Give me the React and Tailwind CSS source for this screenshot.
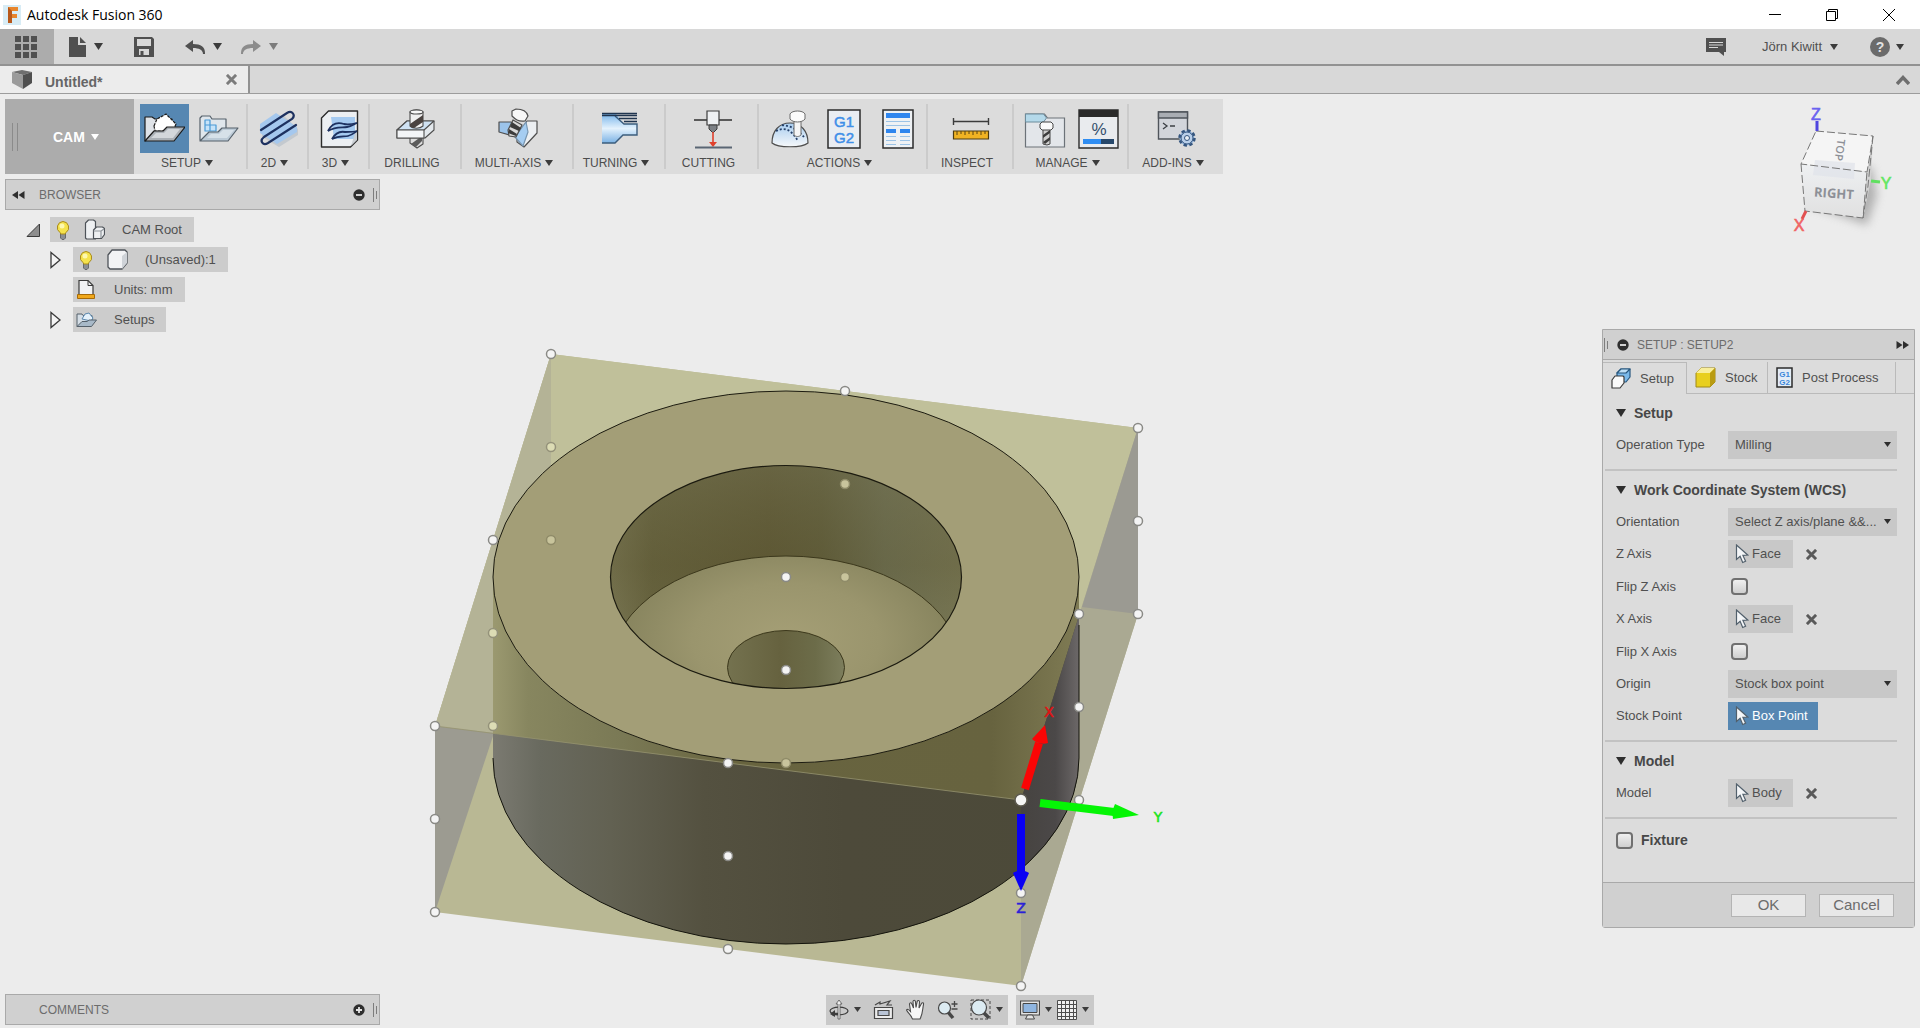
import React, { useState } from "react";

/* ---------- small shared glyphs ---------- */

function Caret({ className = "text-[#3c3c3c]" }) {
  return (
    <svg width="9" height="7" viewBox="0 0 9 7" className={`shrink-0 ${className}`} fill="currentColor">
      <path d="M0 0h9L4.5 7z" />
    </svg>
  );
}

function SmallCaret({ className = "text-[#3c3c3c]" }) {
  return (
    <svg width="8" height="6" viewBox="0 0 8 6" className={`shrink-0 ${className}`} fill="currentColor">
      <path d="M0 0h8L4 6z" />
    </svg>
  );
}

function Grip() {
  return (
    <svg width="5" height="14" viewBox="0 0 5 14" stroke="#7d7d7d" strokeWidth="1" className="shrink-0">
      <path d="M.5 0v14M3.5 3v8" />
    </svg>
  );
}

function RoundSign({ plus }) {
  return (
    <svg width="12" height="12" viewBox="0 0 12 12" className="shrink-0">
      <circle cx="6" cy="6" r="5.7" fill="#2e2e2e" />
      <path d={plus ? "M3 6h6M6 3v6" : "M3 6h6"} stroke="#e4e4e4" strokeWidth="1.8" />
    </svg>
  );
}

function Cross() {
  return (
    <svg width="11" height="11" viewBox="0 0 12 12" stroke="currentColor" strokeWidth="3.2">
      <path d="M1 1l10 10M11 1L1 11" />
    </svg>
  );
}

function Pointer() {
  return (
    <svg width="14" height="20" viewBox="0 0 14 20" className="shrink-0">
      <path d="M1.5 1v14.5l3.6-3.2 2.6 6.2 2.9-1.3-2.7-5.8 4.8-.4z" fill="#f4f6f8" stroke="#52606c" strokeWidth="1.2" />
    </svg>
  );
}

/* ---------- ribbon icons ---------- */

function SetupIcon() {
  return (
    <svg width="42" height="34" viewBox="0 0 42 34" stroke="#1c1c1c" strokeWidth="1.2" strokeLinejoin="round">
      <path d="M2 29V5h7l3 2h17v10z" fill="#dfe3e8" />
      <path d="M11 14l3-7 9-5 10 10-3 7H12z" fill="#fff" strokeDasharray="3 1" />
      <path d="M2 29l9-10h9l4-4h18L31 29z" fill="#aab0b6" />
      <path d="M13 21h8l4-4h12l-7 9H8z" fill="#d3d7db" stroke="none" />
    </svg>
  );
}

function FolderIcon() {
  return (
    <svg width="42" height="34" viewBox="0 0 42 34" stroke="#55606a" strokeWidth="1.2" strokeLinejoin="round">
      <path d="M3 28V6l2-2h8l2 3h14v10L16 28z" fill="#dfe6ec" />
      <path d="M8 8h5v5h6v6H8zM13 13v6M8 13h5" fill="#c7e3f8" stroke="#4a9ad6" />
      <path d="M3 29l9-9h9l4-4h16L31 29z" fill="#bccad6" />
      <path d="M14 22h8l4-4h11l-7 8H10z" fill="#d7e1e9" stroke="none" />
    </svg>
  );
}

function Milling2dIcon() {
  return (
    <svg width="40" height="40" viewBox="0 0 40 40">
      <path d="M3 18L24 6l15 14v6L20 38 3 28z" fill="#c3c9cf" />
      <path d="M1 15L17 4l21 14v5L18 35 1 24z" fill="#a5c8ee" />
      <g fill="none" stroke="#1d3160" strokeWidth="2.200" strokeLinecap="round">
        <path d="M2 21L28 4c5-3 9 2 5 6L5 28c-5 4-1 9 4 6l28-18" />
      </g>
    </svg>
  );
}

function Milling3dIcon() {
  return (
    <svg width="40" height="40" viewBox="0 0 40 40" strokeLinejoin="round">
      <path d="M1.500 9l7-7h29v29l-7 7h-29z" fill="#eceff2" stroke="#2b2b2b" strokeWidth="1.400" />
      <path d="M11 8h24v22H14z" fill="#a5caf0" />
      <path d="M31 37l6-6V18z" fill="#c9ced3" />
      <g fill="none" stroke="#1d3160" strokeWidth="1.800">
        <path d="M8 22c4-8 10-9 16-7 5 1 9 0 13-1" />
        <path d="M8 22c8-5 14-3 19-4s7-3 10-4" />
        <path d="M12 30c4-7 8-8 13-7 5 0 9 0 12-1" />
        <path d="M12 30c7-4 12-2 16-3s6-3 9-5" />
      </g>
    </svg>
  );
}

function DrillingIcon() {
  return (
    <svg width="42" height="42" viewBox="0 0 42 42" stroke="#4e4e4e" strokeWidth="1.100" strokeLinejoin="round">
      <path d="M15 28h13v8l-6 4-7-5z" fill="#dcdcdc" />
      <path d="M16 36l11-8v5l-6 6z" fill="#5b5b5b" stroke="none" />
      <path d="M2 22l10-9h27v9l-9 8H2z" fill="#e3e8ec" />
      <path d="M2 22h27l10-9H12z" fill="#cfe2f3" />
      <path d="M2 22h27v8H2z" fill="#f3f5f7" />
      <path d="M15 4v14c3 3 10 3 13 0V4c-3-3-10-3-13 0z" fill="#f0f0f0" />
      <path d="M15 16l13-9v7l-9 6c-2 0-4-1-4-2z" fill="#4b4340" stroke="none" />
      <ellipse cx="21.500" cy="4" rx="6.500" ry="2" fill="#f8f8f8" />
    </svg>
  );
}

function MultiAxisIcon() {
  return (
    <svg width="42" height="42" viewBox="0 0 42 42" stroke="#4e4e4e" strokeWidth="1.200" strokeLinejoin="round">
      <path d="M2 14h12l9 12-4 3L2 24z" fill="#9cc4ea" />
      <path d="M20 27l10-14h10v12L27 39l-7-5z" fill="#eceff2" />
      <path d="M18 29l11-15 2 10-5 14z" fill="#a5cdf2" stroke="#7795b0" />
      <path d="M16 12l9 5-6 12-7-1-1-6z" fill="#d9d9d9" />
      <path d="M15 14l9 6-2 3-9-4zM12 21l8 5-1 2-8-3z" fill="#3c3c3c" stroke="none" />
      <path d="M15 3l4-2c8 0 11 3 12 7l-3 5c-7 1-10-2-13-5z" fill="#f7f7f7" />
    </svg>
  );
}

function TurningIcon() {
  return (
    <svg width="38" height="34" viewBox="0 0 38 34">
      <defs>
        <linearGradient id="turn" x1="0" y1="0" x2="0" y2="1">
          <stop offset="0" stopColor="#7bb6ea" />
          <stop offset=".5" stopColor="#e4f2fd" />
          <stop offset="1" stopColor="#7bb2e4" />
        </linearGradient>
      </defs>
      <path d="M1 2h14l8 10h13v11H22l-8 8H1z" fill="url(#turn)" />
      <path d="M1 31h13l8-8h14V12H23L14 4" fill="none" stroke="#3d5d7c" strokeWidth="1.400" />
      <path d="M1 1.500h35M1 3.500h35M18 6.500h18M23 9.500h13" stroke="#20354f" strokeWidth="1.400" />
    </svg>
  );
}

function CuttingIcon() {
  return (
    <svg width="42" height="42" viewBox="0 0 42 42">
      <path d="M2 12h38" stroke="#2f2f2f" strokeWidth="1.500" />
      <path d="M15 3h12v14H15z" fill="#eef0f2" stroke="#3c3c3c" strokeWidth="1.200" />
      <path d="M17 17h8v4l-4 4-4-4z" fill="#7c8085" stroke="#3c3c3c" />
      <path d="M21 24v13" stroke="#e0402c" strokeWidth="1.600" />
      <path d="M17 34h8l-4 5z" fill="#e0402c" />
      <path d="M3 39.500h37" stroke="#5a6674" strokeWidth="2" />
    </svg>
  );
}

function SimulateIcon() {
  return (
    <svg width="40" height="40" viewBox="0 0 40 40">
      <defs>
        <linearGradient id="dome" x1="0" y1="0" x2="0" y2="1">
          <stop offset="0" stopColor="#a8cdf0" />
          <stop offset="1" stopColor="#f6f8fa" />
        </linearGradient>
      </defs>
      <path d="M2 34c0-12 7-20 18-20s18 8 18 20c-6 5-30 5-36 0z" fill="url(#dome)" stroke="#4d4d4d" strokeWidth="1.200" />
      <path d="M6 22c10-5 16 0 22 10M12 16c8 1 14 3 22 12" fill="none" stroke="#24406a" strokeWidth="1.800" strokeDasharray="2 2" />
      <path d="M24 12v14c2 2 5 2 7 0V12z" fill="#f5f5f5" stroke="#6a6a6a" />
      <path d="M20 5c2-4 13-4 15 0v5c-3 4-12 4-15 0z" fill="#fbfbfb" stroke="#6a6a6a" />
    </svg>
  );
}

function PostIcon() {
  return (
    <svg width="34" height="40" viewBox="0 0 34 40">
      <path d="M1 1h32v38H1z" fill="#e9edf2" stroke="#2b2b2b" strokeWidth="1.500" />
      <text x="17" y="18" textAnchor="middle" fontFamily="Liberation Sans, sans-serif" fontSize="15" fill="#3f8fe8" stroke="#3f8fe8" strokeWidth=".5">G1</text>
      <text x="17" y="34" textAnchor="middle" fontFamily="Liberation Sans, sans-serif" fontSize="15" fill="#3f8fe8" stroke="#3f8fe8" strokeWidth=".5">G2</text>
    </svg>
  );
}

function SheetIcon() {
  return (
    <svg width="32" height="40" viewBox="0 0 32 40">
      <path d="M1 1h30v38H1z" fill="#eef1f4" stroke="#2b2b2b" strokeWidth="1.500" />
      <path d="M4 4h24v5H4zM4 20h10v4H4zM18 20h10v4H18z" fill="#2f86ee" />
      <path d="M4 12.500h24M4 16.500h24M4 27.500h10M4 31.500h10M4 35.500h10M18 27.500h10M18 31.500h10M18 35.500h10" stroke="#9cc3e6" />
    </svg>
  );
}

function InspectIcon() {
  return (
    <svg width="38" height="24" viewBox="0 0 38 24">
      <path d="M1.500 1v7M36.500 1v7M1 4.500h36" stroke="#3c3c3c" strokeWidth="1.400" />
      <path d="M1.500 14h35v8h-35z" fill="#f0b323" stroke="#4d3c12" strokeWidth="1.200" />
      <path d="M5 14v4M9 14v3M13 14v4M17 14v3M21 14v4M25 14v3M29 14v4M33 14v3" stroke="#5a4412" />
    </svg>
  );
}

function ToolLibraryIcon() {
  return (
    <svg width="42" height="40" viewBox="0 0 42 40">
      <path d="M1.500 5h19l3 4h17v29h-39z" fill="#e3e6ea" stroke="#6c7278" strokeWidth="1.200" />
      <path d="M1.500 5h18l3 4-3 4h-18z" fill="#b4d9ea" stroke="#6d8c9c" />
      <path d="M19 18h7v17l-3 1-4-1z" fill="#cfcfcf" stroke="#454545" />
      <path d="M19 26l7-5v3l-7 5zM19 33l7-5v3l-5 4z" fill="#3c3c3c" />
      <path d="M16 15l2-2h9l2 2v4l-2 2h-9l-2-2z" fill="#fafafa" stroke="#454545" />
    </svg>
  );
}

function TaskIcon() {
  return (
    <svg width="41" height="40" viewBox="0 0 41 40">
      <path d="M1 1h39v38H1z" fill="#e9ebee" stroke="#2b2b2b" strokeWidth="1.400" />
      <path d="M1 1h39v7H1z" fill="#2a2a2a" />
      <text x="21" y="26" textAnchor="middle" fontFamily="Liberation Sans, sans-serif" fontSize="17" fill="#35506c">%</text>
      <path d="M5 30h18v5H5z" fill="#2f8df2" />
      <path d="M23 30h13v5H23z" fill="#27486b" />
    </svg>
  );
}

function AddInsIcon() {
  return (
    <svg width="40" height="38" viewBox="0 0 40 38">
      <path d="M1.500 2h29v27h-29z" fill="#d2d5db" stroke="#4f545b" strokeWidth="1.400" />
      <path d="M1.500 2h29v6h-29z" fill="#a9adb3" stroke="#4f545b" strokeWidth="1.400" />
      <path d="M6 13l4 3-4 3M13 16h5" fill="none" stroke="#3c4046" strokeWidth="1.300" />
      <circle cx="30" cy="28" r="7.500" fill="#9cbbe0" stroke="#35567f" strokeWidth="2.500" strokeDasharray="3.400 2.490" />
      <circle cx="30" cy="28" r="6" fill="#b9cfe9" stroke="#35567f" />
      <circle cx="30" cy="28" r="2.500" fill="#e8eef5" stroke="#35567f" />
    </svg>
  );
}

/* ---------- browser tree icons ---------- */

function Bulb() {
  return (
    <svg width="16" height="20" viewBox="0 0 16 20" className="shrink-0">
      <path d="M5.500 13h5v5l-1.500 1.500H7L5.500 18z" fill="#8b8f95" stroke="#55585c" strokeWidth=".8" />
      <path d="M8 1.500a6 6 0 0 0-3 11l.8 1.500h4.400l.8-1.500a6 6 0 0 0-3-11z" fill="#f5e34d" stroke="#a98b1c" />
      <circle cx="7" cy="6" r="2.500" fill="#fdf8b0" />
    </svg>
  );
}

function ComponentIcon() {
  return (
    <svg width="21" height="21" viewBox="0 0 21 21" className="shrink-0" fill="#eef0f2" stroke="#4e5359" strokeWidth="1.200" strokeLinejoin="round">
      <path d="M1.500 4l3-3h5l2 1.500V20h-9l-1-1z" />
      <path d="M9.500 11l3-3h6l2 1.500v6l-3 4h-8z" />
      <path d="M9.500 12h7.500v7M17 12l3-2" fill="none" stroke="#8f959b" />
    </svg>
  );
}

function BodyIcon() {
  return (
    <svg width="21" height="21" viewBox="0 0 21 21" className="shrink-0" strokeLinejoin="round">
      <path d="M1 6l4-5h13l2 2v11l-5 6H3l-2-2z" fill="#f2f3f5" stroke="#4e5359" strokeWidth="1.300" />
      <path d="M15 20V7l5-4v11z" fill="#cfd3d8" />
    </svg>
  );
}

function UnitsIcon() {
  return (
    <svg width="21" height="21" viewBox="0 0 21 21" className="shrink-0">
      <path d="M3 15V1.500h9l5 5V15" fill="#f1f2f4" stroke="#3b3b3b" strokeWidth="1.200" />
      <path d="M12 1.500v5h5" fill="none" stroke="#3b3b3b" />
      <path d="M1.500 15.500h17v4h-17z" fill="#f0a81c" stroke="#a86b08" />
    </svg>
  );
}

function SetupsIcon() {
  return (
    <svg width="21" height="16" viewBox="0 0 21 16" className="shrink-0" stroke="#55606a" strokeLinejoin="round">
      <path d="M1 14.500V2h5l1 1.500h9V9l-8 5.500z" fill="#d5dee6" />
      <path d="M6 7l3-5 4-1 4 5-2 3z" fill="#e4f1fb" stroke="#5b87ad" />
      <path d="M1 14.500L6 9.500h5l2-1.500h7.500l-5 6.500z" fill="#a8b9c8" />
    </svg>
  );
}

/* ---------- dialog tab icons ---------- */

function SetupTabIcon() {
  return (
    <svg width="20" height="21" viewBox="0 0 20 21" strokeLinejoin="round" strokeWidth="1.200">
      <path d="M6 5l4-4h9v8l-4 5H6z" fill="#7ab9ea" stroke="#27577f" />
      <path d="M6 5h9l4-4h-9z" fill="#bfe0f7" stroke="#27577f" />
      <path d="M1 12l3-4h8l1 1v6l-4 5H1z" fill="#fafafa" stroke="#3b3b3b" />
    </svg>
  );
}

function StockTabIcon() {
  return (
    <svg width="21" height="21" viewBox="0 0 21 21">
      <path d="M1 6l5-5h14v14l-5 5H1z" fill="#e8cf1f" stroke="#a08a18" />
      <path d="M1 6l5-5h14l-5 5z" fill="#f8ee9c" />
      <path d="M15 6l5-5v14l-5 5z" fill="#b99b12" />
    </svg>
  );
}

function PostTabIcon() {
  return (
    <svg width="17" height="21" viewBox="0 0 17 21">
      <path d="M1 1h15v19H1z" fill="#e4edf6" stroke="#2b2b2b" strokeWidth="1.500" />
      <text x="8.500" y="10" textAnchor="middle" fontFamily="Liberation Sans, sans-serif" fontWeight="700" fontSize="8" fill="#3b86da">G1</text>
      <text x="8.500" y="18" textAnchor="middle" fontFamily="Liberation Sans, sans-serif" fontWeight="700" fontSize="8" fill="#3b86da">G2</text>
    </svg>
  );
}

/* ---------- window chrome ---------- */

function TitleBar() {
  return (
    <header className="flex h-[29px] items-center bg-white pl-[3px] text-black">
      <svg width="18" height="20" viewBox="0 0 18 20" className="shrink-0">
        <path d="M0 0h18v20H0z" fill="#d8ecf5" />
        <path d="M5 2h10v4H9v3h5v4H9v5H5z" fill="#e8852c" />
        <path d="M5 2l4 4v12H5z" fill="#b8581a" />
      </svg>
      <h1 className="ml-1.5 font-['Open_Sans','Noto_Sans',sans-serif] text-[14px] leading-5">Autodesk Fusion 360</h1>
      <div className="ml-auto flex h-full pr-[3px]">
        <button aria-label="Minimize" className="flex w-[57px] items-center justify-center">
          <svg width="12" height="12" viewBox="0 0 12 12" stroke="currentColor"><path d="M0 5.500h12" /></svg>
        </button>
        <button aria-label="Restore" className="flex w-[57px] items-center justify-center">
          <svg width="12" height="12" viewBox="0 0 12 12" stroke="currentColor" fill="none">
            <path d="M.5 2.500h9v9h-9zM2.500 2.500v-2h9v9h-2" />
          </svg>
        </button>
        <button aria-label="Close" className="flex w-[57px] items-center justify-center">
          <svg width="12" height="12" viewBox="0 0 12 12" stroke="currentColor"><path d="M0 0l12 12M12 0L0 12" /></svg>
        </button>
      </div>
    </header>
  );
}

function QuickBar() {
  return (
    <div className="flex h-[37px] border-b-2 border-[#929292] bg-[#d8d8d8] text-[#505050]">
      <button aria-label="Show data panel" className="flex w-[54px] items-center bg-[#acacac] pl-[15px]">
        <svg width="22" height="22" viewBox="0 0 22 22" fill="currentColor">
          <path d="M0 0h6v6H0zM8 0h6v6H8zM16 0h6v6h-6zM0 8h6v6H0zM8 8h6v6H8zM16 8h6v6h-6zM0 16h6v6H0zM8 16h6v6H8zM16 16h6v6h-6z" />
        </svg>
      </button>
      <div className="ml-[15px] flex items-center gap-[31px]">
        <button aria-label="File" className="flex items-center gap-2">
          <svg width="17" height="20" viewBox="0 0 17 20" fill="currentColor"><path d="M0 0h9v8h8v12H0z" /><path d="M11 0l6 6h-6z" /></svg>
          <Caret />
        </button>
        <button aria-label="Save">
          <svg width="20" height="20" viewBox="0 0 20 20" fill="currentColor">
            <path fillRule="evenodd" d="M0 0h18l2 2v18H0zM3 2v7h14V2zM5 12v6h10v-6z" />
            <path d="M6.500 14h3v4h-3z" />
          </svg>
        </button>
        <div className="flex items-center gap-[19px]">
          <button aria-label="Undo" className="flex items-center gap-2">
            <svg width="20" height="14" viewBox="0 0 20 14" fill="currentColor"><path d="M0 6l8-6v4c8 0 12 3 12 9v1h-2c0-4-4-6-10-6v4z" /></svg>
            <Caret />
          </button>
          <button aria-label="Redo" className="flex items-center gap-2 text-[#8c8c8c]">
            <svg width="20" height="14" viewBox="0 0 20 14" fill="currentColor"><path d="M20 6l-8-6v4C4 4 0 7 0 13v1h2c0-4 4-6 10-6v4z" /></svg>
            <Caret className="text-[#7c7c7c]" />
          </button>
        </div>
      </div>
      <div className="ml-auto flex items-center gap-9 pr-4">
        <button aria-label="Notifications">
          <svg width="20" height="18" viewBox="0 0 20 18">
            <path d="M0 0h20v14h-2v4l-5-4H0z" fill="currentColor" />
            <path d="M3 4.500h14M3 7h14M3 9.500h9" stroke="#d8d8d8" strokeWidth="1.200" />
          </svg>
        </button>
        <button className="flex items-center gap-2 text-[13px] leading-4 text-[#505050]">
          Jörn Kiwitt
          <SmallCaret />
        </button>
        <button aria-label="Help" className="-ml-1 flex items-center gap-1.5">
          <svg width="20" height="20" viewBox="0 0 20 20">
            <circle cx="10" cy="10" r="10" fill="#6b6b6b" />
            <text x="10" y="15" textAnchor="middle" fontFamily="Liberation Sans, sans-serif" fontWeight="700" fontSize="14" fill="#e2e2e2">?</text>
          </svg>
          <SmallCaret />
        </button>
      </div>
    </div>
  );
}

function DocumentTabs() {
  return (
    <nav className="flex h-7 border-b border-[#9c9c9c] bg-[#d8d8d8]">
      <div className="flex w-[250px] items-center border-r-2 border-[#929292] bg-[#ececec] pr-[11px] pl-3">
        <svg width="20" height="19" viewBox="0 0 20 19" className="shrink-0">
          <path d="M0 2l10-2 10 2-9 3z" fill="#6f6f6f" />
          <path d="M0 2l11 3v14L0 13z" fill="#9b9b9b" />
          <path d="M11 5l9-3v11l-9 6z" fill="#4f4f4f" />
        </svg>
        <span className="ml-[13px] pt-1 text-[14px] leading-5 font-bold text-[#666666]">Untitled*</span>
        <button aria-label="Close tab" className="ml-auto text-[#7c7c7c]"><Cross /></button>
      </div>
      <button aria-label="Collapse" className="mr-2.5 ml-auto text-[#6e6e6e]">
        <svg width="14" height="10" viewBox="0 0 14 10" fill="none" stroke="currentColor" strokeWidth="3.400"><path d="M1 9l6-6.500L13 9" /></svg>
      </button>
    </nav>
  );
}

/* ---------- ribbon ---------- */

const RIBBON = [
  { label: "SETUP", menu: true, width: "w-[114px]", icons: [SetupIcon, FolderIcon], active: 0 },
  { label: "2D", menu: true, width: "w-[61px]", icons: [Milling2dIcon] },
  { label: "3D", menu: true, width: "w-[61px]", icons: [Milling3dIcon] },
  { label: "DRILLING", width: "w-[92px]", icons: [DrillingIcon] },
  { label: "MULTI-AXIS", menu: true, width: "w-[112px]", icons: [MultiAxisIcon] },
  { label: "TURNING", menu: true, width: "w-[92px]", icons: [TurningIcon] },
  { label: "CUTTING", width: "w-[93px]", icons: [CuttingIcon] },
  { label: "ACTIONS", menu: true, width: "w-[169px]", icons: [SimulateIcon, PostIcon, SheetIcon] },
  { label: "INSPECT", width: "w-[86px]", icons: [InspectIcon] },
  { label: "MANAGE", menu: true, width: "w-[115px]", icons: [ToolLibraryIcon, TaskIcon] },
  { label: "ADD-INS", menu: true, width: "w-[94px]", icons: [AddInsIcon] },
];

function RibbonGroup({ group, last }) {
  return (
    <div className={`flex flex-col items-center ${group.width} ${last ? "" : "border-r-2 border-[#cbcbcb]"}`}>
      <div className="flex gap-[5px] pl-0.5">
        {group.icons.map((Icon, i) => (
          <button
            key={i}
            aria-label={`${group.label} ${i + 1}`}
            className={`flex size-[49px] items-center justify-center ${group.active === i ? "bg-[#5687b2]" : ""}`}
          >
            <Icon />
          </button>
        ))}
      </div>
      <button className="mt-0.5 flex items-center gap-1 pr-1.5 text-[12px] leading-4 text-[#4c4c4c]">
        {group.label}
        {group.menu && <SmallCaret />}
      </button>
    </div>
  );
}

function Ribbon() {
  return (
    <div className="flex h-[75px] self-start bg-[#dcdcdc]">
      <button className="flex w-[129px] items-center bg-[#acacac] pl-[7px] text-[14px] leading-5 font-bold text-white">
        <svg width="7" height="28" viewBox="0 0 7 28" stroke="#8b8b8b"><path d="M.5 0v28M5.500 0v28" /></svg>
        <span className="mr-1.5 ml-[34px]">CAM</span>
        <SmallCaret className="text-white" />
      </button>
      <div className="flex py-[5px]">
        {RIBBON.map((group, i) => (
          <RibbonGroup key={group.label} group={group} last={i === RIBBON.length - 1} />
        ))}
      </div>
    </div>
  );
}

/* ---------- browser ---------- */

function BarPanel({ title, plus, children }) {
  return (
    <div className="flex h-[31px] w-[375px] items-center border border-[#a9a9a9] bg-[#d0d0d0] pr-px text-[12px] leading-4 text-[#6c6c6c]">
      <div className="w-[33px] pl-1.5">{children}</div>
      <h2>{title}</h2>
      <button aria-label={plus ? "Expand" : "Minimize panel"} className="mr-2 ml-auto"><RoundSign plus={plus} /></button>
      <Grip />
    </div>
  );
}

function TreeRow({ indent, toggle, bulb, icon, label }) {
  return (
    <li className={`flex items-center gap-2.5 ${indent ? "pl-[44px]" : "pl-[21px]"}`}>
      <svg width="14" height="18" viewBox="0 0 14 18" className="shrink-0">
        {toggle === "open" && <path d="M13.500 3v12.500H1z" fill="#8d8d8d" stroke="#3a3a3a" />}
        {toggle === "closed" && <path d="M2 1.500l9 7.500-9 7.500z" fill="#f4f4f4" stroke="#3a3a3a" strokeWidth="1.300" />}
      </svg>
      <div className={`flex h-[25px] items-center bg-[#cccccc] pr-3 ${bulb ? "pl-[5px]" : "pl-[3px]"}`}>
        {bulb && <span className="mr-[13px]"><Bulb /></span>}
        {icon}
        <span className="ml-[17px] text-[13px] leading-4 text-[#505050]">{label}</span>
      </div>
    </li>
  );
}

function Browser() {
  return (
    <aside className="mt-[5px]">
      <BarPanel title="BROWSER">
        <svg width="13" height="8" viewBox="0 0 13 8" fill="#2e2e2e"><path d="M6 0v8L0 4zM12.500 0v8l-6-4z" /></svg>
      </BarPanel>
      <ul className="mt-[7px] flex flex-col gap-[5px]">
        <TreeRow toggle="open" bulb icon={<ComponentIcon />} label="CAM Root" />
        <TreeRow indent toggle="closed" bulb icon={<BodyIcon />} label="(Unsaved):1" />
        <TreeRow indent icon={<UnitsIcon />} label="Units: mm" />
        <TreeRow indent toggle="closed" icon={<SetupsIcon />} label="Setups" />
      </ul>
    </aside>
  );
}

/* ---------- 3D scene ---------- */

// stock box points: [x, y, shade], where shade 0 is free, 1 lies behind the stock, 2 behind the body
const POINTS = [
  [551, 354, 0], [845, 391, 0], [1138, 428, 0], [1138, 521, 0], [1138, 614, 0],
  [551, 447, 1], [551, 540, 2], [493, 540, 0], [493, 633, 1], [493, 726, 1],
  [435, 726, 0], [435, 819, 0], [435, 912, 0], [728, 763, 0], [728, 856, 0],
  [728, 949, 0], [1021, 986, 0], [1021, 893, 0], [1079, 614, 0], [1079, 707, 0],
  [1079, 800, 0], [786, 577, 0], [786, 670, 0], [786, 763, 2], [845, 484, 2], [845, 577, 2],
];
const POINT_FILL = ["#f4f4f4", "#dcdcb4", "#c8c49c"];
const POINT_RING = ["#8a8a86", "#94927a", "#8f8b68"];

function Scene() {
  const side = "M493 577V758A293 186 0 0 0 1079 758V577A293 186 0 0 1 493 577z";
  return (
    <svg viewBox="0 94 1920 934" className="absolute inset-0 h-full w-full" role="img" aria-label="Model view">
      <defs>
        <linearGradient id="sideDark" gradientUnits="userSpaceOnUse" x1="493" y1="0" x2="1079" y2="0">
          <stop offset="0" stopColor="#7b7a71" />
          <stop offset=".08" stopColor="#696a5f" />
          <stop offset=".2" stopColor="#626152" />
          <stop offset=".36" stopColor="#545140" />
          <stop offset=".6" stopColor="#4d4a3a" />
          <stop offset="1" stopColor="#4c4a39" />
        </linearGradient>
        <linearGradient id="sideOlive" gradientUnits="userSpaceOnUse" x1="493" y1="0" x2="1079" y2="0">
          <stop offset="0" stopColor="#9b9970" />
          <stop offset=".06" stopColor="#87865f" />
          <stop offset=".22" stopColor="#7a7955" />
          <stop offset=".42" stopColor="#68643f" />
          <stop offset=".85" stopColor="#67633f" />
          <stop offset="1" stopColor="#7f7b54" />
        </linearGradient>
        <linearGradient id="sideRight" gradientUnits="userSpaceOnUse" x1="1020" y1="0" x2="1079" y2="0">
          <stop offset="0" stopColor="#464340" />
          <stop offset=".6" stopColor="#4b4848" />
          <stop offset="1" stopColor="#6c6868" />
        </linearGradient>
        <linearGradient id="wall" gradientUnits="userSpaceOnUse" x1="610" y1="0" x2="962" y2="0">
          <stop offset="0" stopColor="#7f7d5a" />
          <stop offset=".12" stopColor="#6b6844" />
          <stop offset=".45" stopColor="#625d3a" />
          <stop offset=".6" stopColor="#646240" />
          <stop offset=".78" stopColor="#73765a" />
          <stop offset="1" stopColor="#7e7e5c" />
        </linearGradient>
        <linearGradient id="wallShade" x1="0" y1="0" x2="0" y2="1">
          <stop offset="0" stopColor="#6e6b4a" stopOpacity=".5" />
          <stop offset=".45" stopColor="#544d28" stopOpacity=".35" />
          <stop offset="1" stopColor="#544d28" stopOpacity="0" />
        </linearGradient>
        <radialGradient id="floor" gradientUnits="userSpaceOnUse" cx="786" cy="640" r="170" gradientTransform="translate(0 250) scale(1 .61)">
          <stop offset="0" stopColor="#a59f76" />
          <stop offset=".55" stopColor="#9a956d" />
          <stop offset="1" stopColor="#86835d" />
        </radialGradient>
        <linearGradient id="bore" gradientUnits="userSpaceOnUse" x1="727" y1="0" x2="845" y2="0">
          <stop offset="0" stopColor="#74724f" />
          <stop offset=".45" stopColor="#66623f" />
          <stop offset=".75" stopColor="#6c6c49" />
          <stop offset="1" stopColor="#7d7e5d" />
        </linearGradient>
        <clipPath id="stockTop"><path d="M551 354L1138 428 1021 800 435 726z" /></clipPath>
        <clipPath id="rightFace"><path d="M1138 428V614L1021 986V800z" /></clipPath>
        <clipPath id="pocket"><ellipse cx="786" cy="577" rx="175.500" ry="111.500" /></clipPath>
      </defs>

      {/* stock */}
      <path d="M551 354L1138 428V614L1021 986 435 912V726z" fill="#b9b894" />
      <path d="M551 354L1138 428 1021 800 435 726z" fill="#c0c09a" />
      <path d="M551 354V540L493 733 435 726z" fill="#b4b396" />
      <path d="M435 726L494 733 435 912z" fill="#9c9b91" />
      <path d="M1138 428V614L1021 986V800z" fill="#aaa992" />
      <path d="M1138 428V614L1082 607z" fill="#9b9a92" />

      {/* body */}
      <path d={side} fill="url(#sideDark)" />
      <path d={side} fill="url(#sideOlive)" clipPath="url(#stockTop)" />
      <path d={side} fill="url(#sideRight)" clipPath="url(#rightFace)" />
      <path d="M435 726L1021 800" stroke="#96946f" strokeOpacity=".8" />
      <path d="M493 758A293 186 0 0 0 1079 758V625" fill="none" stroke="#14140c" />
      <ellipse cx="786" cy="577" rx="293" ry="186" fill="#a39e77" stroke="#1c1b10" />

      <g clipPath="url(#pocket)">
        <path d="M610 465h353v224H610z" fill="url(#wall)" />
        <path d="M610 465h353v224H610z" fill="url(#wallShade)" />
        <ellipse cx="786" cy="667.500" rx="175.500" ry="111.500" fill="url(#floor)" stroke="#3c381c" />
        <ellipse cx="786" cy="667.500" rx="58.500" ry="37" fill="url(#bore)" stroke="#3c381c" />
      </g>
      <ellipse cx="786" cy="577" rx="175.500" ry="111.500" fill="none" stroke="#1c1b10" strokeWidth="1.200" />

      {POINTS.map(([x, y, shade]) => (
        <circle key={`${x}-${y}`} cx={x} cy={y} r="4.500" fill={POINT_FILL[shade]} stroke={POINT_RING[shade]} strokeWidth="1.500" />
      ))}

      {/* WCS triad */}
      <path d="M1021 814v60" stroke="#0a00f4" strokeWidth="8" />
      <path d="M1013 873c4-3 12-3 16 0l-8 18z" fill="#0a00f4" />
      <path d="M1025 789l14-46" stroke="#fa0505" strokeWidth="8" />
      <path d="M1032 739l13-14 3 18c-5 2-12 0-16-4z" fill="#fa0505" />
      <path d="M1040 803l74 9" stroke="#05f505" strokeWidth="8" />
      <path d="M1115 804l24 11-26 4c-1-5 0-11 2-15z" fill="#05f505" />
      <circle cx="1021" cy="800" r="6" fill="#f6f6f6" stroke="#5d5a50" strokeWidth="1.500" />
      <g fontFamily="DejaVu Sans, sans-serif" fontSize="14" textAnchor="middle" strokeWidth=".5">
        <text x="1049" y="717" fill="#e01414" stroke="#e01414">X</text>
        <text x="1158" y="822" fill="#1be41b" stroke="#1be41b">Y</text>
        <text x="1021" y="913" fill="#2a20d8" stroke="#2a20d8">Z</text>
      </g>
    </svg>
  );
}

function ViewCube() {
  return (
    <svg width="110" height="140" viewBox="1790 99 110 140" className="mr-4" role="img" aria-label="View cube">
      <defs>
        <filter id="soft" x="-30%" y="-30%" width="160%" height="160%"><feGaussianBlur stdDeviation="5" /></filter>
        <linearGradient id="cubeFront" x1="0" y1="0" x2="0" y2="1">
          <stop offset="0" stopColor="#eef0f2" />
          <stop offset="1" stopColor="#e0e0e0" />
        </linearGradient>
      </defs>
      <path d="M1810 205l62-40 6 30-10 30z" fill="#8a8a8a" opacity=".6" filter="url(#soft)" />
      <path d="M1817 131l57 5-6 36-66-8z" fill="#f5f5f5" />
      <path d="M1802 164l66 8-4 46-58-7z" fill="url(#cubeFront)" />
      <path d="M1874 136l-6 36-4 46 8-38z" fill="#d2d2d2" />
      <path d="M1816 160l40 3-1 16-41-4z" fill="#dfe3ea" opacity=".7" />
      <path d="M1817 131l57 5-6 36-66-8zM1802 164l4 47 58 7 4-46M1874 136l-5 50-5 32" fill="none" stroke="#777" strokeDasharray="8 3" />
      <g strokeWidth="3">
        <path d="M1818 121v10" stroke="#4f45e0" />
        <path d="M1872 181l9 1" stroke="#5fe05f" />
        <path d="M1807 211l-4 8" stroke="#e25050" />
      </g>
      <g textAnchor="middle" fontFamily="Open Sans, sans-serif" fill="#8d9097">
        <text x="1835" y="198" fontWeight="700" fontSize="13" transform="rotate(4 1835 193)">RIGHT</text>
        <text x="1841" y="154" fontWeight="600" fontSize="11" transform="rotate(98 1841 150)">TOP</text>
      </g>
      <g textAnchor="middle" fontFamily="Liberation Sans, sans-serif" fontSize="16" strokeWidth=".6">
        <text x="1817" y="120" fill="#6a62f0" stroke="#6a62f0">Z</text>
        <text x="1887" y="189" fill="#63e663" stroke="#63e663">Y</text>
        <text x="1800" y="231" fill="#f06464" stroke="#f06464">X</text>
      </g>
    </svg>
  );
}

/* ---------- setup dialog ---------- */

function Heading({ children }) {
  return (
    <h3>
      <button className="flex h-[18px] items-center gap-2 text-[14px] leading-[18px] font-bold text-[#474747]">
        <svg width="10" height="8" viewBox="0 0 10 8" fill="#2e2e2e"><path d="M0 0h10L5 8z" /></svg>
        {children}
      </button>
    </h3>
  );
}

function Row({ label, htmlFor, tall, children }) {
  return (
    <div className={`flex items-center ${tall ? "h-[29px]" : "h-7"}`}>
      <label htmlFor={htmlFor} className="w-[112px] shrink-0">{label}</label>
      {children}
    </div>
  );
}

function Dropdown({ id, options }) {
  return (
    <div className="relative flex-1">
      <select id={id} className="h-7 w-full appearance-none truncate bg-[#c8c8c8] pr-4 pl-[7px] text-[13px] leading-4">
        {options.map((o) => (
          <option key={o}>{o}</option>
        ))}
      </select>
      <svg width="7" height="5" viewBox="0 0 7 5" fill="#2e2e2e" className="pointer-events-none absolute top-[11px] right-1.5"><path d="M0 0h7L3.500 5z" /></svg>
    </div>
  );
}

function Picker({ id, label, active, clearable }) {
  return (
    <>
      <button
        id={id}
        className={`flex h-7 items-center gap-[3px] pl-[7px] ${active ? "w-[90px] bg-[#5687b2] text-white" : "w-[65px] bg-[#c8c8c8]"}`}
      >
        <Pointer />
        {label}
      </button>
      {clearable && <button aria-label={`Clear ${id}`} className="ml-[13px] text-[#5a5a5a]"><Cross /></button>}
    </>
  );
}

function Check({ id, checked, onChange }) {
  return (
    <input
      id={id}
      type="checkbox"
      checked={checked}
      onChange={(e) => onChange(e.target.checked)}
      className="size-[17px] shrink-0 appearance-none rounded-[4px] border-2 border-[#707070] bg-linear-to-b from-[#f0f0f0] to-[#cfcfcf] checked:from-[#5687b2] checked:to-[#5687b2]"
    />
  );
}

function Divider() {
  return <hr className="-ml-[11px] border-t-2 border-[#c2c2c2]" />;
}

const TABS = [
  { label: "Setup", icon: SetupTabIcon, width: "w-[84px]" },
  { label: "Stock", icon: StockTabIcon, width: "w-[81px]" },
  { label: "Post Process", icon: PostTabIcon, width: "w-[128px]" },
];

function SetupDialog() {
  const [tab, setTab] = useState("Setup");
  const [flipZ, setFlipZ] = useState(false);
  const [flipX, setFlipX] = useState(false);
  const [fixture, setFixture] = useState(false);

  return (
    <section className="w-[313px] rounded-b-[3px] border border-[#a9a9a9] bg-[#dcdcdc] text-[13px] leading-4 text-[#505050]">
      <header className="flex h-[30px] items-center border-b border-[#a9a9a9] bg-[#d0d0d0] pr-[5px] pl-px text-[12px] text-[#6c6c6c]">
        <Grip />
        <button aria-label="Minimize dialog" className="mr-2 ml-2"><RoundSign /></button>
        <h2>SETUP : SETUP2</h2>
        <button aria-label="Dock" className="ml-auto">
          <svg width="13" height="8" viewBox="0 0 13 8" fill="#2e2e2e"><path d="M.5 0v8l6-4zM7 0v8l6-4z" /></svg>
        </button>
      </header>

      <div role="tablist" className="mt-0.5 flex h-8">
        {TABS.map(({ label, icon: Icon, width }) => (
          <button
            key={label}
            role="tab"
            aria-selected={tab === label}
            onClick={() => setTab(label)}
            className={`flex items-center gap-[9px] border-r border-r-[#bababa] pl-2 ${width} ${
              tab === label ? "border-t border-t-[#bababa]" : "border-b border-b-[#bababa]"
            }`}
          >
            <Icon />
            {label}
          </button>
        ))}
        <span className="flex-1 border-b border-[#bababa]" />
      </div>

      <div className="pr-[17px] pb-[33px] pl-[13px]">
        <div className="py-2.5">
          <Heading>Setup</Heading>
          <div className="mt-[9px]">
            <Row label="Operation Type" htmlFor="operation">
              <Dropdown id="operation" options={["Milling", "Turning or mill/turn", "Cutting"]} />
            </Row>
          </div>
        </div>
        <Divider />
        <div className="py-2.5">
          <Heading>Work Coordinate System (WCS)</Heading>
          <div className="mt-[9px] flex flex-col gap-1">
            <Row label="Orientation" htmlFor="orientation">
              <Dropdown id="orientation" options={["Select Z axis/plane &&...", "Model orientation"]} />
            </Row>
            <Row label="Z Axis" htmlFor="z-axis"><Picker id="z-axis" label="Face" clearable /></Row>
            <Row label="Flip Z Axis" htmlFor="flip-z" tall>
              <span className="flex pl-[3px]"><Check id="flip-z" checked={flipZ} onChange={setFlipZ} /></span>
            </Row>
            <Row label="X Axis" htmlFor="x-axis"><Picker id="x-axis" label="Face" clearable /></Row>
            <Row label="Flip X Axis" htmlFor="flip-x" tall>
              <span className="flex pl-[3px]"><Check id="flip-x" checked={flipX} onChange={setFlipX} /></span>
            </Row>
            <Row label="Origin" htmlFor="origin">
              <Dropdown id="origin" options={["Stock box point", "Model origin", "Selected point"]} />
            </Row>
            <Row label="Stock Point" htmlFor="stock-point"><Picker id="stock-point" label="Box Point" active /></Row>
          </div>
        </div>
        <Divider />
        <div className="py-2.5">
          <Heading>Model</Heading>
          <div className="mt-[9px]">
            <Row label="Model" htmlFor="model"><Picker id="model" label="Body" clearable /></Row>
          </div>
        </div>
        <Divider />
        <div className="flex items-center gap-2 pt-3">
          <Check id="fixture" checked={fixture} onChange={setFixture} />
          <label htmlFor="fixture" className="text-[14px] leading-[18px] font-bold text-[#474747]">Fixture</label>
        </div>
      </div>

      <footer className="flex h-[45px] items-center justify-end gap-[13px] border-t border-[#a9a9a9] bg-[#d0d0d0] pr-5">
        <button className="h-[23px] w-[75px] border border-[#b4b4b4] bg-[#e8e8e8] text-[15px] leading-5 text-[#6c6c6c]">OK</button>
        <button className="h-[23px] w-[75px] border border-[#b4b4b4] bg-[#e8e8e8] text-[15px] leading-5 text-[#6c6c6c]">Cancel</button>
      </footer>
    </section>
  );
}

/* ---------- navigation bar ---------- */

function NavButton({ label, menu, children }) {
  return (
    <button aria-label={label} className="flex items-center gap-[5px]">
      {children}
      {menu && (
        <svg width="7" height="5" viewBox="0 0 7 5" fill="#3c3c3c"><path d="M0 0h7L3.500 5z" /></svg>
      )}
    </button>
  );
}

function NavigationBar() {
  return (
    <div className="flex gap-2">
      <div className="flex h-[30px] w-[182px] items-center justify-between bg-[#c9c9c9] pr-[5px] pl-[3px]">
        <NavButton label="Orbit" menu>
          <svg width="20" height="20" viewBox="0 0 20 20" fill="none" stroke="#3c3c3c" strokeWidth="1.200">
            <ellipse cx="10" cy="11" rx="9" ry="3.800" />
            <path d="M10 0l3 4h-2v15H9V4H7z" fill="#eee" stroke="#555" strokeWidth=".8" />
            <path d="M3 14h6" strokeWidth="2.500" />
            <path d="M6 10v7l-5-3z" fill="#3c3c3c" stroke="none" />
          </svg>
        </NavButton>
        <NavButton label="Look at">
          <svg width="21" height="20" viewBox="0 0 21 20" fill="none" stroke="#474747" strokeWidth="1.200">
            <path d="M1.500 7.500h18v11h-18z" fill="#ececec" />
            <path d="M5 10.500h11v5H5z" fill="#b9c4d6" />
            <path d="M2 5l5-3v2l10-3-3 4h5" />
          </svg>
        </NavButton>
        <NavButton label="Pan">
          <svg width="20" height="21" viewBox="0 0 20 21">
            <path d="M6 19c-1-3-4-5-5.500-8 1-1.500 2.500 0 4 1.500L3.500 5c.5-1.800 2-1.500 2.400 0L7.500 9 7 2.500C7.300.8 9 .8 9.400 2.500L10 8.500l1.200-6c.5-1.500 2.200-1.300 2.300.3L13 9l2.500-4.500c.8-1.400 2.300-.6 2 .8C16.500 10 17 14 14 20H6.500z" fill="#f7f7f7" stroke="#4a4a4a" strokeWidth="1.100" />
          </svg>
        </NavButton>
        <NavButton label="Zoom">
          <svg width="21" height="20" viewBox="0 0 21 20" fill="none" stroke="#474747">
            <path d="M11 12l5 6" strokeWidth="3.500" />
            <circle cx="7.500" cy="8" r="6" fill="#dcebf2" strokeWidth="1.200" />
            <path d="M17.500 1v6M14.500 4h6M14.500 9h6" strokeWidth="1.300" />
          </svg>
        </NavButton>
        <NavButton label="Zoom window" menu>
          <svg width="21" height="21" viewBox="0 0 21 21" fill="none" stroke="#474747">
            <path d="M1 1h19v19H1z" strokeDasharray="3 2" />
            <path d="M14 14l5 5" strokeWidth="3.500" />
            <circle cx="9" cy="8.500" r="7.500" fill="#dcebf2" strokeWidth="1.200" />
          </svg>
        </NavButton>
      </div>
      <div className="flex h-[30px] w-[78px] items-center justify-between bg-[#c9c9c9] pr-[5px] pl-1">
        <NavButton label="Display settings" menu>
          <svg width="20" height="20" viewBox="0 0 20 20" stroke="#474747">
            <path d="M.5 1h19v14H.5z" fill="#e4e4e4" strokeWidth="1.200" />
            <path d="M3 3.500h14v9H3z" fill="#8fb5e0" />
            <path d="M7.500 15h5l2 4h-9z" fill="#e4e4e4" />
          </svg>
        </NavButton>
        <NavButton label="Grid" menu>
          <svg width="20" height="20" viewBox="0 0 20 20" fill="#f1f1f1" stroke="#4e4e4e">
            <path d="M.5.5h19v19H.5zM4.500 0v20M8.500 0v20M12.500 0v20M16.500 0v20M0 4.500h20M0 8.500h20M0 12.500h20M0 16.500h20" />
          </svg>
        </NavButton>
      </div>
    </div>
  );
}

export default function App() {
  return (
    <div className="flex min-h-screen flex-col bg-[#ececec] font-['Liberation_Sans',Arial,sans-serif]">
      <TitleBar />
      <QuickBar />
      <DocumentTabs />
      <main className="relative flex flex-1 flex-col pt-[5px] pr-[5px] pb-[3px] pl-[5px]">
        <Scene />
        <div className="relative flex flex-1 items-start justify-between">
          <div className="flex flex-col">
            <Ribbon />
            <Browser />
          </div>
          <div className="flex flex-col items-end gap-[90px]">
            <ViewCube />
            <SetupDialog />
          </div>
        </div>
        <div className="relative grid grid-cols-[1fr_auto_1fr] items-center">
          <BarPanel title="COMMENTS" plus />
          <NavigationBar />
        </div>
      </main>
    </div>
  );
}
